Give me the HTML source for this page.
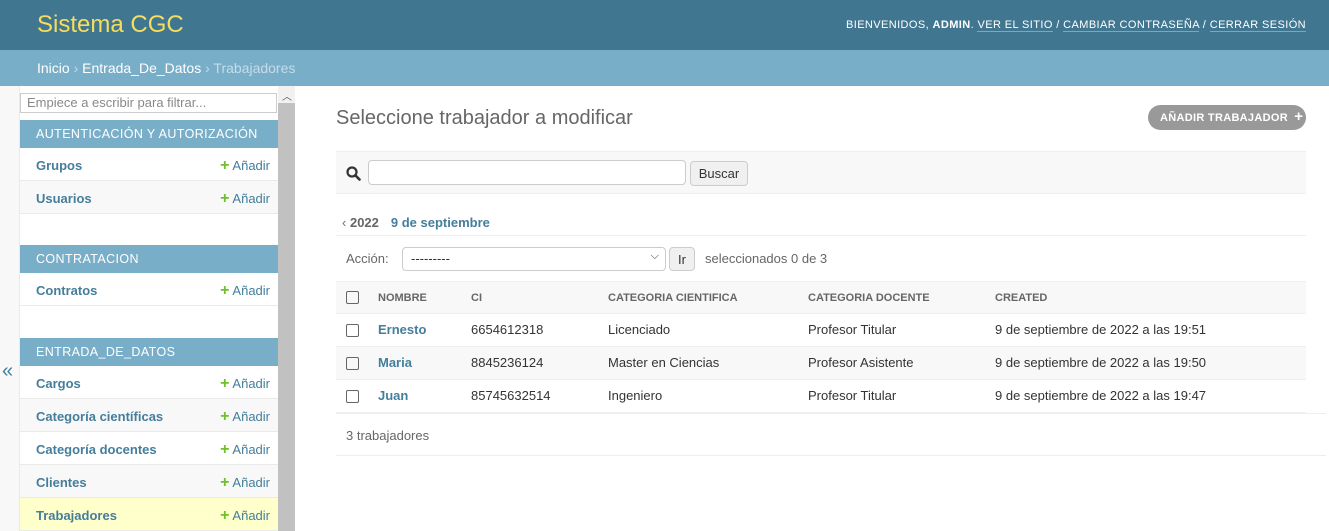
<!DOCTYPE html>
<html><head><meta charset="utf-8"><style>
*{box-sizing:border-box;margin:0;padding:0}
body{width:1329px;height:531px;overflow:hidden;font-family:"Liberation Sans",sans-serif;font-size:13px;color:#333;background:#fff;position:relative}
#hdr{position:absolute;left:0;top:0;width:1329px;height:50px;background:#417690}
#hdr .brand{position:absolute;left:37px;top:11px;font-size:24px;color:#f5dd5d;font-weight:300}
#hdr .tools{position:absolute;right:23px;top:19px;font-size:11px;color:#fff;letter-spacing:.4px;text-transform:uppercase;white-space:nowrap}
#hdr .tools a{color:#fff;border-bottom:1px solid rgba(255,255,255,.35);text-decoration:none}
#bc{position:absolute;left:0;top:50px;width:1329px;height:36px;background:#79aec8;color:#c4dce8;padding:10px 37px;font-size:14px}
#bc a{color:#fff;text-decoration:none}
#toggle{position:absolute;left:0;top:86px;width:20px;height:445px;background:#f8f8f8;border-right:1px solid #eaeaea;color:#447e9b;font-size:20px}
#toggle span{position:absolute;left:2px;top:274px}
#filter{position:absolute;left:20px;top:93px;width:257px;height:20px;border:1px solid #ccc;font-size:13px;color:#888;padding:1px 6px}
#sb{position:absolute;left:278px;top:86px;width:17px;height:445px;background:#f1f1f1}
#sb .thumb{position:absolute;left:0;top:17px;width:17px;height:428px;background:#c1c1c1}
#sb .up{position:absolute;left:4px;top:2px;font-size:10px;color:#555}
.mod{position:absolute;left:20px;width:258px}
.mod .h{height:28px;background:#79aec8;color:#fff;font-size:12.5px;letter-spacing:.4px;padding:7px 16px;text-transform:uppercase}
.mod .r{height:33px;border-bottom:1px solid #eaeaea;padding:10px 16px;position:relative;background:#fff}
.mod .r b{color:#447e9b;font-size:13px}
.mod .r .add{position:absolute;right:8px;top:10px;color:#447e9b;font-size:13px}
.mod .r .add i{color:#70bf2b;font-style:normal;font-weight:bold;font-size:16px;line-height:13px;margin-right:3px}
.mod .r.cur{background:#ffc}
h1{position:absolute;left:336px;top:107px;font-size:20px;font-weight:300;color:#666}
#addbtn{position:absolute;left:1148px;top:105px;width:158px;height:25px;border-radius:13px;background:#999;color:#fff;font-size:11px;font-weight:bold;letter-spacing:.3px;padding:6px 12px;white-space:nowrap}
#search{position:absolute;left:336px;top:151px;width:970px;height:43px;background:#f8f8f8;border-top:1px solid #eee;border-bottom:1px solid #eee}
#search input{position:absolute;left:32px;top:8px;width:318px;height:25px;border:1px solid #ccc;border-radius:4px;background:#fff}
.btn{position:absolute;border:1px solid #ccc;border-radius:4px;background:#f0f0f0;font-size:13px;color:#333;text-align:center}
#dates{position:absolute;left:336px;top:208px;width:970px;height:28px;border-bottom:1px solid #eee;font-size:13px;font-weight:bold;padding-left:6px;padding-top:7px}
#dates a{color:#447e9b;margin-left:12px}
#actions{position:absolute;left:336px;top:236px;width:970px;height:45px;color:#666}
table{position:absolute;left:336px;top:281px;width:970px;border-collapse:collapse}
th{height:32px;background:#f8f8f8;border-top:1px solid #eee;border-bottom:1px solid #eee;font-size:11px;color:#666;text-align:left;font-weight:bold;text-transform:uppercase;padding-left:6px}
td{height:33px;border-bottom:1px solid #eee;font-size:13px;color:#333;padding-left:6px;padding-bottom:2px}
td a{color:#447e9b;font-weight:bold}
.cb{display:inline-block;width:13px;height:13px;border:1.5px solid #666;border-radius:2px;vertical-align:middle;margin-left:4px}
#count{position:absolute;left:336px;top:413px;width:990px;height:43px;border-top:1px solid #eee;border-bottom:1px solid #eee;padding:14px 10px;color:#666;font-size:13px}
</style></head><body>
<div id="hdr"><div class="brand">Sistema CGC</div>
<div class="tools">Bienvenidos, <b style="color:#fff">admin</b>. <a>Ver el sitio</a> / <a>Cambiar contraseña</a> / <a>Cerrar sesión</a></div></div>
<div id="bc"><a>Inicio</a> › <a>Entrada_De_Datos</a> › Trabajadores</div>
<div id="toggle"><span>«</span></div>
<div id="filter">Empiece a escribir para filtrar...</div>
<div id="sb"><div class="up">︿</div><div class="thumb"></div></div>
<div class="mod" style="top:120px"><div class="h">Autenticación y autorización</div>
<div class="r" style="background:#fff"><b>Grupos</b><span class="add"><i>+</i>Añadir</span></div>
<div class="r" style="background:#f8f8f8"><b>Usuarios</b><span class="add"><i>+</i>Añadir</span></div></div>
<div class="mod" style="top:245px"><div class="h">Contratacion</div>
<div class="r" style="background:#fff"><b>Contratos</b><span class="add"><i>+</i>Añadir</span></div></div>
<div class="mod" style="top:338px"><div class="h">Entrada_De_Datos</div>
<div class="r" style="background:#fff"><b>Cargos</b><span class="add"><i>+</i>Añadir</span></div>
<div class="r" style="background:#f8f8f8"><b>Categoría científicas</b><span class="add"><i>+</i>Añadir</span></div>
<div class="r" style="background:#fff"><b>Categoría docentes</b><span class="add"><i>+</i>Añadir</span></div>
<div class="r" style="background:#f8f8f8"><b>Clientes</b><span class="add"><i>+</i>Añadir</span></div>
<div class="r cur"><b>Trabajadores</b><span class="add"><i>+</i>Añadir</span></div></div>
<h1>Seleccione trabajador a modificar</h1>
<div id="addbtn">AÑADIR TRABAJADOR <span style="font-size:15px;margin-left:3px;line-height:11px">+</span></div>
<div id="search"><svg style="position:absolute;left:10px;top:14px" width="15" height="15" viewBox="0 0 15 15"><circle cx="6" cy="6" r="4.5" fill="none" stroke="#333" stroke-width="2.2"/><path d="M9.3 9.3L13.5 13.5" stroke="#333" stroke-width="2.6" stroke-linecap="round"/></svg>
<input><div class="btn" style="left:354px;top:9px;width:58px;height:25px;padding-top:4px">Buscar</div></div>
<div id="dates"><span style="color:#447e9b;font-weight:normal">‹</span> <span style="color:#666">2022</span><a>9 de septiembre</a></div>
<div id="actions"><span style="position:absolute;left:10px;top:15px">Acción:</span>
<div style="position:absolute;left:66px;top:11px;width:264px;height:24px;border:1px solid #ccc;border-radius:4px;padding:3px 8px;color:#333">---------<span style="position:absolute;right:6px;top:2px;font-size:11px">⌵</span></div>
<div class="btn" style="left:333px;top:11px;width:26px;height:24px;padding-top:4px">Ir</div>
<span style="position:absolute;left:369px;top:15px">seleccionados 0 de 3</span></div>
<table><tr><th style="width:36px"><span class="cb"></span></th><th style="width:93px">Nombre</th><th style="width:137px">CI</th><th style="width:200px">Categoria cientifica</th><th style="width:187px">Categoria docente</th><th>Created</th></tr>
<tr><td><span class="cb"></span></td><td><a>Ernesto</a></td><td>6654612318</td><td>Licenciado</td><td>Profesor Titular</td><td>9 de septiembre de 2022 a las 19:51</td></tr>
<tr style="background:#f8f8f8"><td><span class="cb"></span></td><td><a>Maria</a></td><td>8845236124</td><td>Master en Ciencias</td><td>Profesor Asistente</td><td>9 de septiembre de 2022 a las 19:50</td></tr>
<tr><td><span class="cb"></span></td><td><a>Juan</a></td><td>85745632514</td><td>Ingeniero</td><td>Profesor Titular</td><td>9 de septiembre de 2022 a las 19:47</td></tr></table>
<div id="count">3 trabajadores</div>
</body></html>
